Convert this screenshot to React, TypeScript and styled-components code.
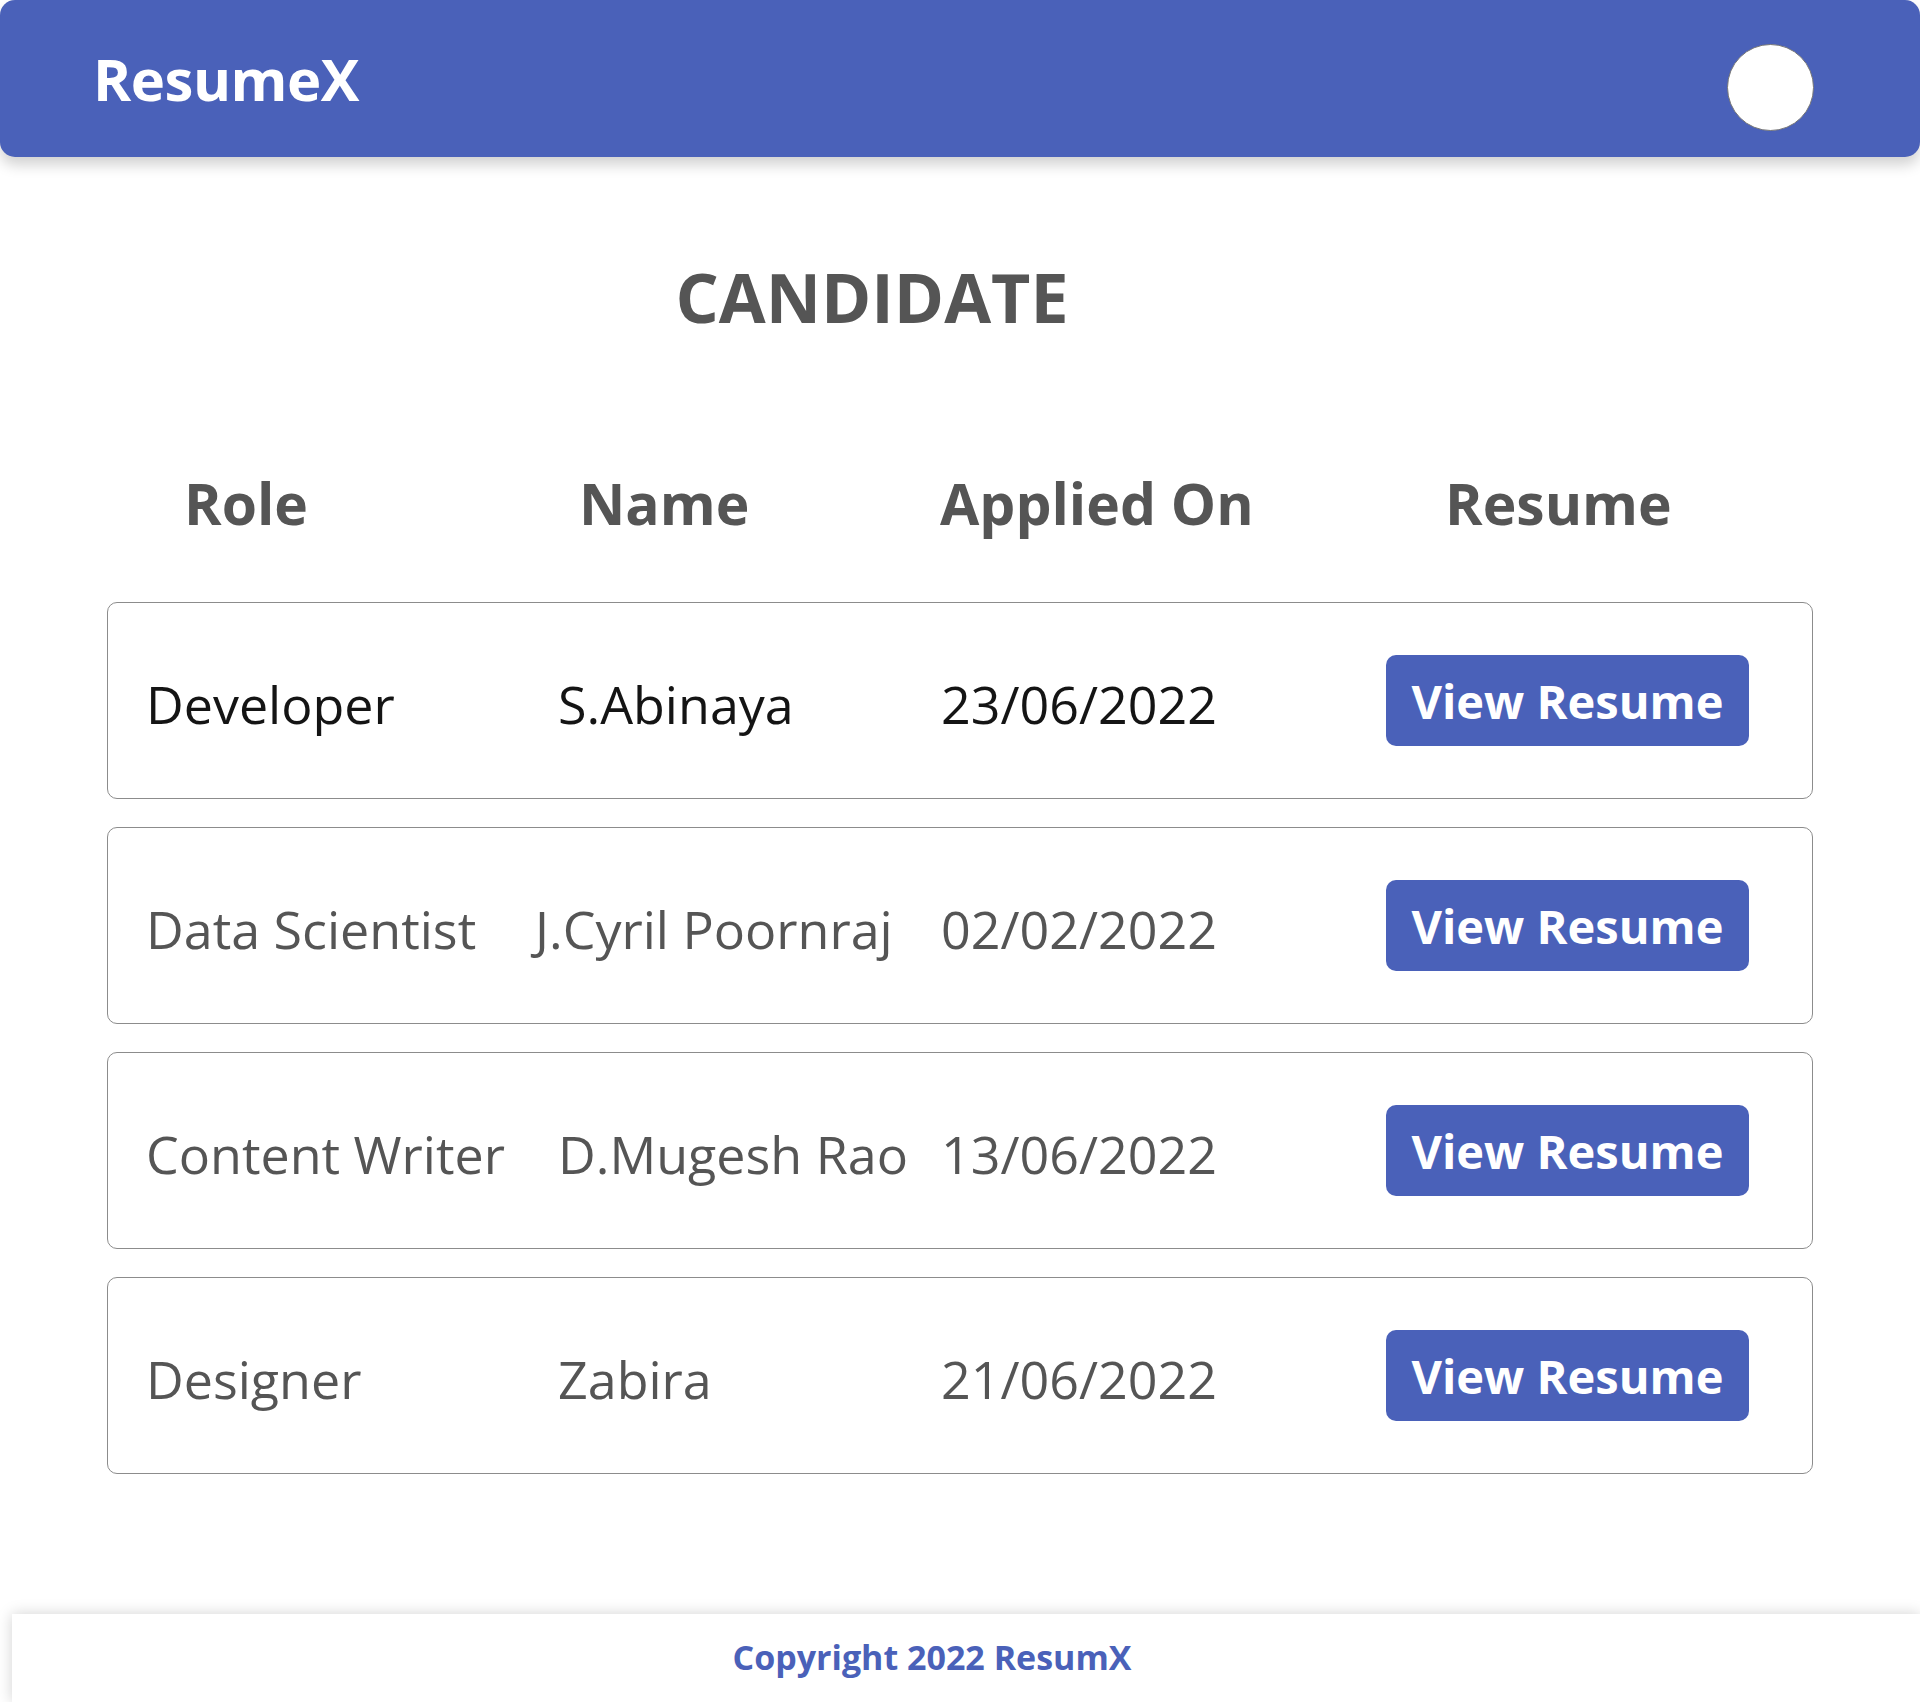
import React from "react";
import styled, { createGlobalStyle } from "styled-components";

const color = {
  brand: "#4a61b9",
  text: "#555555",
  dark: "#141414",
  line: "#8c8c8c",
  white: "#ffffff",
};

const GlobalStyle = createGlobalStyle`
  html, body {
    margin: 0;
    padding: 0;
    background: #ffffff;
    overflow-x: hidden;
  }
  body {
    font-family: "Open Sans", "Noto Sans", "DejaVu Sans", sans-serif;
  }
`;

const Page = styled.div`
  display: flex;
  flex-direction: column;
  min-height: 1702px;
`;

const Header = styled.header`
  display: flex;
  align-items: center;
  justify-content: space-between;
  height: 157px;
  padding: 0 106px 0 93px;
  box-sizing: border-box;
  background: ${color.brand};
  border-radius: 15px;
  box-shadow: 0 8px 14px rgba(0, 0, 0, 0.18);
`;

const Logo = styled.h1`
  margin: 0;
  font-size: 58px;
  font-weight: 700;
  color: ${color.white};
  letter-spacing: -0.5px;
`;

const Avatar = styled.div`
  width: 87px;
  height: 87px;
  margin-top: 17px;
  border-radius: 50%;
  background: ${color.white};
  border: 1px solid #777;
  box-sizing: border-box;
`;

const Main = styled.main`
  flex: 1;
  padding: 0 107px;
`;

const Title = styled.h2`
  margin: 94px 0 0;
  padding-right: 176px;
  font-size: 68px;
  font-weight: 700;
  text-align: center;
  color: ${color.text};
  line-height: 1.362;
`;

const HeadRow = styled.div`
  display: grid;
  grid-template-columns: 395px 361px 505px auto;
  margin-top: 121px;
  padding-left: 77px;
`;

const HeadCell = styled.div`
  font-size: 57px;
  font-weight: 700;
  color: ${color.text};
  line-height: 1.362;
`;

const List = styled.div`
  display: flex;
  flex-direction: column;
  gap: 28px;
  margin-top: 60px;
`;

const Row = styled.div`
  display: grid;
  grid-template-columns: 412px 383px 445px 363px;
  align-items: center;
  height: 197px;
  padding: 8px 0 0 38px;
  box-sizing: border-box;
  border: 1px solid ${color.line};
  border-radius: 10px;
`;

const Cell = styled.div<{ $dark?: boolean; $shift?: number }>`
  font-size: 52px;
  line-height: 1.362;
  color: ${(p) => (p.$dark ? color.dark : color.text)};
  margin-left: ${(p) => p.$shift || 0}px;
  white-space: nowrap;
`;

const ViewButton = styled.button`
  height: 91px;
  margin-top: -8px;
  border: 0;
  border-radius: 10px;
  background: ${color.brand};
  color: ${color.white};
  font-family: inherit;
  font-size: 47px;
  font-weight: 700;
  cursor: pointer;
`;

const Footer = styled.footer`
  height: 88px;
  margin-left: 12px;
  margin-top: 130px;
  padding: 20px 68px 0 0;
  box-sizing: border-box;
  background: ${color.white};
  box-shadow: 0 0 14px rgba(0, 0, 0, 0.18);
  text-align: center;
  font-size: 34px;
  font-weight: 700;
  line-height: 1.362;
  color: ${color.brand};
`;

const candidates = [
  { role: "Developer", name: "S.Abinaya", date: "23/06/2022", dark: true },
  { role: "Data Scientist", name: "J.Cyril Poornraj", date: "02/02/2022", shift: -23 },
  { role: "Content Writer", name: "D.Mugesh Rao", date: "13/06/2022" },
  { role: "Designer", name: "Zabira", date: "21/06/2022" },
];

export default function App() {
  return (
    <Page>
      <GlobalStyle />
      <Header>
        <Logo>ResumeX</Logo>
        <Avatar />
      </Header>
      <Main>
        <Title>CANDIDATE</Title>
        <HeadRow>
          <HeadCell>Role</HeadCell>
          <HeadCell>Name</HeadCell>
          <HeadCell>Applied On</HeadCell>
          <HeadCell>Resume</HeadCell>
        </HeadRow>
        <List>
          {candidates.map((c, i) => (
            <Row key={`cand-${i}`}>
              <Cell $dark={c.dark}>{c.role}</Cell>
              <Cell $dark={c.dark} $shift={c.shift}>
                {c.name}
              </Cell>
              <Cell $dark={c.dark}>{c.date}</Cell>
              <ViewButton>View Resume</ViewButton>
            </Row>
          ))}
        </List>
      </Main>
      <Footer>Copyright 2022 ResumX</Footer>
    </Page>
  );
}
